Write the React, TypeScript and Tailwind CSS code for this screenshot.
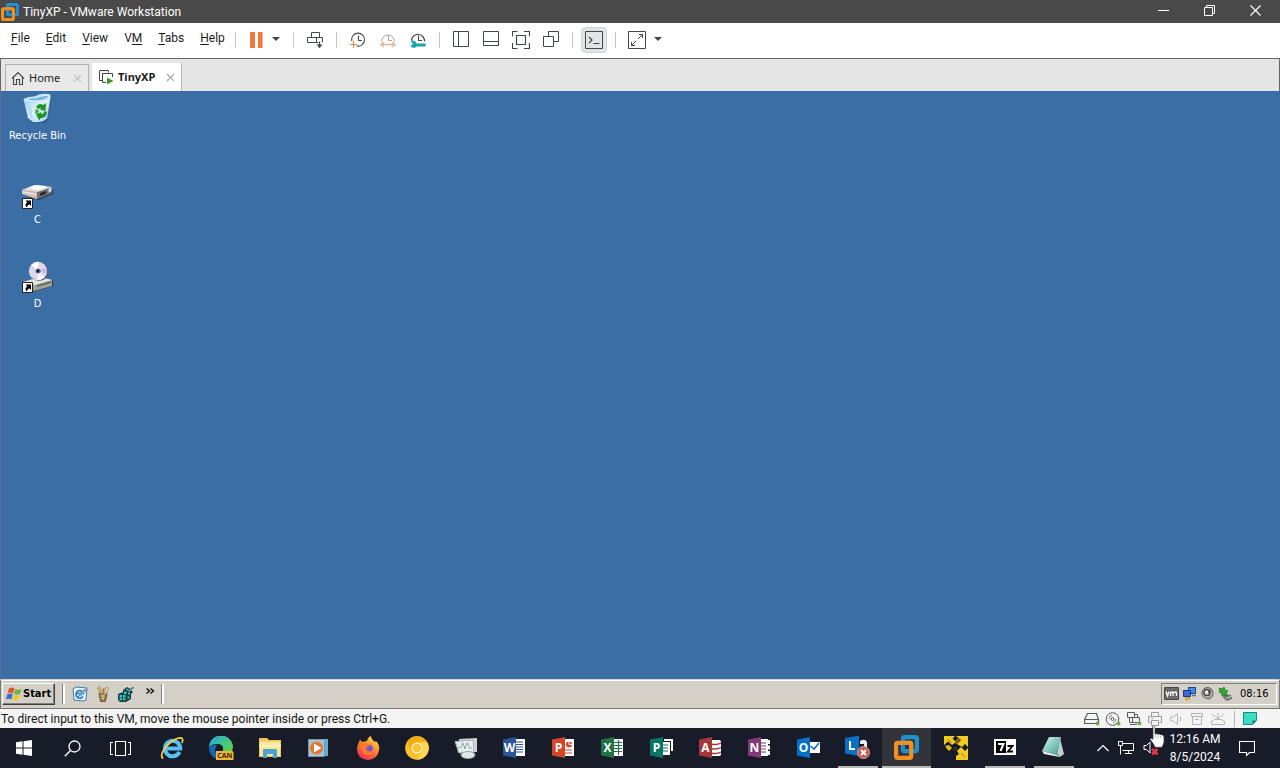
import type { ReactNode } from 'react';

const uiFont = "font-['Noto_Sans','Open_Sans',sans-serif]";
const menuFont = "font-['Roboto','Noto_Sans',sans-serif]";
const xpFont = "font-['DejaVu_Sans_Condensed','DejaVu_Sans',sans-serif]";

function Svg({ w = 20, h = w, children }: { w?: number; h?: number; children: ReactNode }) {
  return (
    <svg width={w} height={h} viewBox={`0 0 ${w} ${h}`} fill="none" aria-hidden="true" className="block shrink-0">
      {children}
    </svg>
  );
}

/* ---------- shared drawings ---------- */

function VmwareLogo({ size }: { size: number }) {
  return (
    <svg width={size} height={size} viewBox="0 0 24 24" fill="none" aria-hidden="true" className="block shrink-0">
      <rect x="8.500" y="2" width="13.500" height="13.500" rx="1.500" stroke="#1d91d0" strokeWidth="4" />
      <rect x="2" y="7.500" width="14.500" height="14.500" rx="1.500" stroke="#f09022" strokeWidth="4" />
      <path d="M8.500 9.500V14q0 1.500 1.500 1.500h4.500" stroke="#1d91d0" strokeWidth="3" />
      <path d="M8.500 7.500H15q1.500 0 1.500 1.500v4" stroke="#f09022" strokeWidth="4" />
    </svg>
  );
}

function Caret() {
  return (
    <Svg w={9} h={5}>
      <path d="M0 0h8L4 4z" fill="#454545" />
    </Svg>
  );
}

/* ---------- title bar ---------- */

function TitleBar() {
  const btn = 'flex h-[23px] w-[46px] items-center justify-center pb-0.5';
  return (
    <header className="flex h-[23px] shrink-0 items-center bg-[#494949] pr-0.5 text-white">
      <div className="pl-px">
        <VmwareLogo size={18} />
      </div>
      <h1 className={`flex-1 pl-1 text-[12px] leading-4 ${menuFont}`}>TinyXP - VMware Workstation</h1>
      <button aria-label="Minimize" className={btn}>
        <Svg w={11}>
          <path d="M0 5.500h11" stroke="#fff" />
        </Svg>
      </button>
      <button aria-label="Restore" className={btn}>
        <Svg w={11}>
          <path d="M.5 2.500h8v8h-8zM2.500 2.500v-2h8v8h-2" stroke="#fff" />
        </Svg>
      </button>
      <button aria-label="Close" className={btn}>
        <Svg w={11}>
          <path d="M.5.5l10 10M10.500.5l-10 10" stroke="#fff" strokeWidth="1.200" />
        </Svg>
      </button>
    </header>
  );
}

/* ---------- menu and toolbar ---------- */

const menus: [string, string, string][] = [
  ['', 'F', 'ile'],
  ['', 'E', 'dit'],
  ['', 'V', 'iew'],
  ['V', 'M', ''],
  ['', 'T', 'abs'],
  ['', 'H', 'elp'],
];

function Tool({ label, active, children }: { label: string; active?: boolean; children: ReactNode }) {
  return (
    <button aria-label={label} className="flex h-[30px] w-[30px] items-center justify-center">
      <span
        className={
          active
            ? 'flex h-[26px] w-[26px] items-center justify-center rounded-sm border border-[#d2d5d6] bg-[#e2e5e6]'
            : 'flex items-center justify-center'
        }
      >
        {children}
      </span>
    </button>
  );
}

function Sep() {
  return <span className="mx-1.5 h-4 w-px bg-[#c4c4c4]" />;
}

function MenuBar() {
  const ink = '#42474b';
  return (
    <div className="flex h-[35px] shrink-0 items-center bg-white pb-0.5">
      <nav className={`flex w-[229px] shrink-0 gap-4 pb-1 pl-[11px] text-[12px] leading-4 text-[#1c1c1c] ${menuFont}`}>
        {menus.map(([a, k, b]) => (
          <button key={k} className="whitespace-nowrap">
            {a}
            <span className="underline underline-offset-2">{k}</span>
            {b}
          </button>
        ))}
      </nav>
      <div className="flex items-center">
        <Sep />
        <Tool label="Suspend">
          <Svg w={14} h={16}>
            <path d="M0 0h5v16H0zM8 0h4.500v16H8z" fill="#f0783a" />
          </Svg>
        </Tool>
        <button aria-label="Power options" className="flex h-[30px] w-[15px] items-center">
          <Caret />
        </button>
        <Sep />
        <Tool label="Send Ctrl+Alt+Del">
          <Svg>
            <path d="M6.500 7.500v-5h8v5M2.500 7.500h15v5M2.500 7.500v5h9v-5M13 12.500h-2" stroke={ink} />
            <path d="M14.500 11.500v6" stroke={ink} strokeWidth="1.400" />
            <path d="M11.500 14.500h6L14.500 18z" fill={ink} />
          </Svg>
        </Tool>
        <Sep />
        <Tool label="Take snapshot">
          <Svg>
            <path d="M3.700 11a6.500 6.500 0 1 1 5 5" stroke={ink} strokeWidth="1.100" />
            <path d="M10.500 5.500v5H14" stroke={ink} strokeWidth="1.100" />
            <path d="M5.500 11v7M2 14.500h7" stroke="#d08b50" strokeWidth="1.200" />
          </Svg>
        </Tool>
        <Tool label="Revert snapshot">
          <Svg>
            <path d="M3.500 11.500a6.500 6.500 0 1 1 13 0" stroke="#a9a4a0" />
            <path d="M10.500 5.500v5H14" stroke="#a9a4a0" />
            <path d="M3 14.500h14M6 12l-3 2.500L6 17M14 12l3 2.500-3 2.500" stroke="#dfb89a" strokeWidth="1.400" />
          </Svg>
        </Tool>
        <Tool label="Manage snapshots">
          <Svg>
            <path d="M3.500 10.500a6.500 6.500 0 1 1 13 1" stroke={ink} strokeWidth="1.200" />
            <path d="M10.500 5.500v5H14" stroke={ink} strokeWidth="1.100" />
            <path
              d="M2.500 11.500l2.500 2-2.500 2.500a3.600 3.600 0 0 0 6 .5h8q1.500 0 1.500-1.500t-1.500-1.500h-8a3.600 3.600 0 0 0-6-2z"
              fill="#18a3ad"
            />
          </Svg>
        </Tool>
        <Sep />
        <Tool label="Show library">
          <Svg w={17}>
            <path d="M.5.5h15v15H.5zM5.500.5v15" stroke={ink} />
          </Svg>
        </Tool>
        <Tool label="Show thumbnail bar">
          <Svg w={17}>
            <path d="M.5.5h15v14H.5zM.5 10.500h15" stroke={ink} />
          </Svg>
        </Tool>
        <Tool label="Full screen">
          <Svg w={18}>
            <path
              d="M5.500.5h-5v5M.5 12v5.500h5M12 .5h5.500v5M17.500 12v5.500H12M4.500 4.500h9v9h-9z"
              stroke={ink}
              strokeWidth="1.200"
            />
          </Svg>
        </Tool>
        <Tool label="Unity mode">
          <Svg w={17}>
            <path d="M.5 5.500h10v10H.5zM5.500 5.500v-5h10v10h-5" stroke={ink} />
          </Svg>
        </Tool>
        <Sep />
        <Tool label="Console view" active>
          <Svg w={18}>
            <path d="M.5.5h17v17H.5z" stroke={ink} />
            <path d="M4 6l3 3-3 3M8.500 12.500h6" stroke={ink} strokeWidth="1.200" />
          </Svg>
        </Tool>
        <Sep />
        <Tool label="Stretch guest">
          <Svg w={18}>
            <path d="M.5.5h17v17H.5z" stroke={ink} />
            <path d="M11 3.500h3.500V7M3.500 11v3.500H7M14.500 3.500l-4.500 4.500M8 10l-4.500 4.500" stroke={ink} />
          </Svg>
        </Tool>
        <button aria-label="Stretch options" className="flex h-[30px] w-[15px] items-center pl-0.5">
          <Caret />
        </button>
      </div>
    </div>
  );
}

/* ---------- tabs ---------- */

function CloseX({ color }: { color: string }) {
  return (
    <Svg w={9}>
      <path d="M1 1l7 7M8 1L1 8" stroke={color} strokeWidth="1.300" />
    </Svg>
  );
}

function TabStrip() {
  return (
    <div className="flex h-[33px] shrink-0 items-end border-x border-t border-[#686868] bg-[#e5e5e5] pl-1 text-[11px] text-[#1b1b1b]">
      <div className="flex h-[27px] w-[84px] items-center border border-b-0 border-[#b2b2b2] bg-[#e9e9e9] pl-[5px]">
        <Svg w={14}>
          <path d="M1 7.500l6-6 6 6M2.500 6.500v7h3v-5h3v5h3v-7" stroke="#42474b" strokeWidth="1.100" />
        </Svg>
        <button className="flex-1 pl-1 text-left leading-4">Home</button>
        <button aria-label="Close Home" className="pr-1.5">
          <CloseX color="#c4c4c4" />
        </button>
      </div>
      <div className="ml-[3px] flex h-7 w-[90px] items-center border-r border-[#b2b2b2] bg-white pl-[7px]">
        <Svg w={15}>
          <path d="M3.500 10.500h-3v-10h9v2M7 12.500H3.500v-9h10V7" stroke="#42474b" />
          <path d="M8 7.500l6.500 3.500L8 14.500z" fill="#3f9a22" />
        </Svg>
        <button className="flex-1 pl-1 text-left font-bold leading-4">TinyXP</button>
        <button aria-label="Close TinyXP" className="pr-1.5">
          <CloseX color="#adadad" />
        </button>
      </div>
    </div>
  );
}

/* ---------- guest desktop ---------- */

function ShortcutArrow() {
  return (
    <>
      <path d="M.5 21.500h10V31.500H.5z" fill="#fff" stroke="#222" />
      <path d="M3.500 23.500H9V29l-1.800-1.700Q5 28.500 4.800 30.500 2 27.500 5.200 25.200z" fill="#000" />
    </>
  );
}

function BinIcon() {
  return (
    <svg width="32" height="32" viewBox="0 0 32 32" aria-hidden="true">
      <defs>
        <linearGradient id="bin" x1="0" y1="0" x2="1" y2="1">
          <stop offset="0" stopColor="#8fc6f0" />
          <stop offset=".5" stopColor="#dff2fd" />
          <stop offset="1" stopColor="#9fcdec" />
        </linearGradient>
      </defs>
      <path d="M8 28l4 2.500 11-1 4-4 2.500-21-3 21z" fill="#2c5482" />
      <path d="M1.500 6L27 1.500 28.500 4 25 25.500q-6 5-14 3.500L6 25z" fill="url(#bin)" />
      <path d="M1.500 6q5-3 11-2.500Q19-.5 28.500 1.500L28 6q-11 4-25 2.500z" fill="#c9e8fa" />
      <path d="M5 6q5-1 9-.5 6-3 12-2.500-1 3-8 4-7 1-13-1z" fill="#77b2de" />
      <path d="M4 10q3 2 5 2l2 15-3-2z" fill="#b9dcf5" />
      <path d="M14 14q3-5 7-2l3-1.800L23.500 18l-6-1.500 2-1.500q-2-.5-3 1.300z" fill="#1f9624" />
      <path d="M25 18.500q0 7-6.500 6.500l-1 2.500L14 21.500l5.500-2.500-.5 2q3 .5 3-2.500z" fill="#1f9624" />
      <path d="M13.500 16l3.500 1-1 4-3-.5z" fill="#42b33c" />
    </svg>
  );
}

function DriveIcon() {
  return (
    <svg width="32" height="32" viewBox="0 0 32 32" aria-hidden="true">
      <path d="M4 19l12 4 15-6v-5L18 21z" fill="#1f3148" />
      <path d="M0 13l12-5 18 2v6L15 22 0 17z" fill="#a49b97" />
      <path d="M0 13l12-5 18 2-15 5z" fill="#dedde2" />
      <path d="M8 10.500L14 8l10 1-2 3-9 1.500z" fill="#fff" />
      <path d="M0 13l15 2.500V22L0 17z" fill="#d1c0ba" />
      <path d="M15 15.500L30 10v6l-15 6z" fill="#756d70" />
      <path d="M18 16l6-2v3l-6 2z" fill="#292a32" />
      <path d="M26.500 11.500l3-1v4l-3 1z" fill="#c5d8ef" />
      <path d="M1 15l13 2.500" stroke="#fff" strokeWidth=".8" />
      <ShortcutArrow />
    </svg>
  );
}

function DiscIcon() {
  return (
    <svg width="32" height="32" viewBox="0 0 32 32" aria-hidden="true">
      <path d="M2 25l9 6 20-6v-6z" fill="#333b3b" />
      <path d="M1 21l17-5 12 3v6l-18 5-11-4z" fill="#9fa397" />
      <path d="M1 21l17-5 12 3-17 5z" fill="#e4e5de" />
      <path d="M15 25l14-4" stroke="#5d6259" strokeWidth="1.500" />
      <circle cx="17" cy="10.500" r="9.500" fill="#4e5c80" />
      <circle cx="16" cy="10" r="9.200" fill="#dad9e9" />
      <path d="M16 10L9.500 3.700a9 9 0 0 1 7-3z" fill="#fff" />
      <path d="M16 10l7 6a9 9 0 0 1-8 3z" fill="#f8f7ff" />
      <path d="M16 10l8.500-3.500a9 9 0 0 1 .3 6z" fill="#c4bddb" />
      <circle cx="16" cy="10" r="2.500" fill="#71738c" />
      <circle cx="16" cy="10" r="1.400" fill="#17171d" />
      <ShortcutArrow />
    </svg>
  );
}

function Desktop() {
  const items: [string, ReactNode][] = [
    ['Recycle Bin', <BinIcon />],
    ['C', <DriveIcon />],
    ['D', <DiscIcon />],
  ];
  return (
    <main className={`flex flex-1 flex-col border-l border-[#5d6f8c] bg-[#3b6ea5] ${xpFont}`}>
      <ul className="flex w-[73px] flex-col gap-[30px] pt-0.5 text-[11px] leading-4 text-white">
        {items.map(([name, icon]) => (
          <li key={name} className="flex h-[54px] flex-col items-center gap-[3px]">
            {icon}
            <span className="whitespace-nowrap">{name}</span>
          </li>
        ))}
      </ul>
    </main>
  );
}

/* ---------- guest taskbar ---------- */

function XpFlag() {
  return (
    <Svg w={16}>
      <path d="M3 2.500q3-2 5.500 0l-1.500 5q-2.500-2-5.500 0z" fill="#e05130" />
      <path d="M9.500 3q2.500 1.500 6 0L14 8q-3 1.500-6 0z" fill="#6cb83c" />
      <path d="M1.200 8.500q3-2 5.500 0L5.200 13.500q-2.500-1.500-5.200 0z" fill="#3f68d2" />
      <path d="M7.700 9q2.500 1.500 6 0l-1.500 5q-3 1.500-6 0z" fill="#f2c72e" />
    </Svg>
  );
}

function XpTaskbar() {
  const grip = 'h-5 w-[3px] border-l border-[#808080] bg-white';
  return (
    <footer
      className={`flex h-[30px] shrink-0 items-center border border-[#777] border-t-[#d4d0c8] bg-[#d4d0c8] shadow-[inset_0_1px_0_#fff] ${xpFont}`}
    >
      <button className="ml-px flex h-[22px] w-[53px] items-center gap-px border border-b-[#404040] border-l-white border-r-[#404040] border-t-white pl-[3px] text-[11px] font-bold shadow-[inset_-1px_-1px_0_#808080]">
        <XpFlag />
        Start
      </button>
      <span className={`ml-[7px] ${grip}`} />
      <div className="flex items-center gap-[7px] pl-[7px]">
        <button aria-label="Internet Explorer">
          <Svg w={16}>
            <path d="M1 3l3-2 11 1-1 12-3 1-9-1z" fill="#e3f3fc" stroke="#487ba3" />
            <path d="M11 10.500a3.800 3.800 0 1 1 .5-3H5" stroke="#2c7cc1" strokeWidth="1.700" />
            <path d="M6 11l6-7 1.500-.5-.5 2-5 5" stroke="#2667a3" fill="#fff" />
          </Svg>
        </button>
        <button aria-label="Paint tools">
          <Svg w={16}>
            <path d="M4 7h8l-1.500 8.500h-5z" fill="#9b8150" stroke="#6a5735" />
            <path d="M6 8L2.500 2l2-1.500L8 7" fill="#d6b56a" stroke="#8e7547" strokeWidth=".6" />
            <path d="M9 8l2-7 2.500 1L11 8" fill="#e6d9a6" stroke="#8e7547" strokeWidth=".6" />
            <path d="M6.500 10h3M7 12.500h2" stroke="#e2cf9c" strokeWidth="1.300" />
            <path d="M8 6l1-4" stroke="#b63e2f" />
          </Svg>
        </button>
        <button aria-label="Registry editor">
          <Svg w={16}>
            <path d="M0 8l5-2V4l4-3 3 2 3-2 1 1-3 2 2 2-2 2v5l-5 3H2l-2-2z" fill="#113f42" />
            <path
              d="M1.500 9H4v2.500H1.500zM5 9h2.500v2.500H5zM1.500 12.200H4v2H1.500zM5 12.200h2.500v2H5zM6 5.500h2.500V8H6zM10 6.500h2v2h-2zM9.500 10.500h2v2h-2z"
              fill="#40c7c8"
            />
            <path d="M8 3l3 1.500M11 5.500l3.500-3" stroke="#8fe6e4" />
          </Svg>
        </button>
      </div>
      <button aria-label="More quick launch items" className="pb-1.5 pl-3">
        <Svg w={9} h={7}>
          <path d="M.5.5l3 2.500-3 2.500M4.500.5l3 2.500-3 2.500" stroke="#111" strokeWidth="1.400" />
        </Svg>
      </button>
      <span className={`ml-1.5 ${grip}`} />
      <div className="ml-auto mr-0.5 flex h-[22px] w-[116px] items-center gap-0.5 border border-b-white border-l-[#808080] border-r-white border-t-[#808080] pl-0.5 text-[11px] leading-4">
        <Svg w={16}>
          <path d="M.5 1.500h14v12H.5z" fill="#6a6a6a" stroke="#484848" />
          <path
            d="M2 5.500L3.500 10 5 5.500M6.500 10V6M6.500 7q2-2 2.500 0v3M9.500 7q2.500-2 3 0v3"
            stroke="#fff"
            strokeWidth="1.300"
          />
        </Svg>
        <Svg w={16}>
          <path d="M6.500 1.500h7v6h-7z" fill="#3a8ee5" stroke="#233f88" />
          <path d="M1.500 4.500h7v6h-7z" fill="#2f6fd6" stroke="#1c3477" />
          <path d="M3 12.500h5M10 9.500h4" stroke="#5d6c8b" strokeWidth="1.500" />
          <circle cx="5.500" cy="13" r="2" fill="#e6b32e" />
        </Svg>
        <Svg w={16}>
          <circle cx="7.500" cy="7" r="5.500" fill="#b9b9b9" stroke="#555" />
          <circle cx="7" cy="6.500" r="3" fill="#e8e8e8" stroke="#444" strokeWidth="1.400" />
          <path d="M8 5l3-1.500L9 9z" fill="#444" />
          <path d="M9 13.500l4-5" stroke="#888" strokeWidth="2" />
        </Svg>
        <Svg w={16}>
          <path d="M6 8l7 1 1.500 4-6 2-4-4z" fill="#777b75" />
          <path d="M8.500 12l5-1.500" stroke="#d8d8d8" />
          <path d="M1 2l3 1 2-2 1 3 3 1-2 2 2 3-4-1-2 1-.5-3L1 6l1-2z" fill="#31a83a" stroke="#147a20" strokeWidth=".7" />
        </Svg>
        <time className="pl-1">08:16</time>
      </div>
    </footer>
  );
}

/* ---------- VMware status bar ---------- */

function StatusBar() {
  const on = '#565b5e';
  const off = '#b3b6b8';
  const dot = <circle cx="13.500" cy="12.500" r="2" fill="#76ac37" />;
  return (
    <div className="flex h-[19px] shrink-0 items-center bg-[#f4f4f4] text-[#151515]">
      <p className={`flex-1 whitespace-nowrap pl-px text-[12px] leading-4 ${menuFont}`}>
        To direct input to this VM, move the mouse pointer inside or press Ctrl+G.
      </p>
      <div className="flex items-center gap-[5px]">
        <Svg w={16}>
          <path d="M3.500 2.500h9l2 6v4H.5v-4zM.5 8.500h14" stroke={on} strokeWidth="1.200" />
          {dot}
        </Svg>
        <Svg w={16}>
          <circle cx="7.500" cy="8" r="6.300" stroke={on} />
          <circle cx="7.500" cy="8" r="1.500" stroke={on} />
          <path d="M4 8q0-3 3-4M11 8q0 3-3 4" stroke={on} strokeWidth=".7" />
          {dot}
        </Svg>
        <Svg w={16}>
          <path d="M1.500 1.500h7v5h-7zM6.500 6.500h7v5h-7zM3.500 6.500v5h3M8.500 3.500h3v3M4 13.500h7" stroke={on} />
          {dot}
        </Svg>
        <Svg w={16}>
          <path d="M4.500 5.500v-4h7v4M3.500 11.500h-2v-6h13v6h-2M4.500 9.500h7v5h-7zM4 7.500h2" stroke="#989c9f" />
        </Svg>
        <Svg w={16}>
          <path d="M2.500 6h3l4-3.500v11L5.500 10h-3zM12 5.500q2 2.500 0 5" stroke={off} />
        </Svg>
        <Svg w={16}>
          <path d="M2.500 2.500h11v3h-11zM3.500 5.500v8h9v-8M6 8.500h4" stroke={off} />
        </Svg>
        <Svg w={16}>
          <path d="M1.500 13.500v-3l3-2h7l3 2v3zM8 2v6M5.500 5.500L8 8l2.500-2.500M2 3l3 3M14 3l-3 3" stroke={off} />
        </Svg>
      </div>
      <span className="ml-2 mr-2 h-4 w-px bg-[#b5b5b5]" />
      <div className="mr-[22px]">
        <Svg w={15}>
          <path d="M.5 1.500h13v8l-4 4h-9z" fill="#36dfc2" stroke="#168b80" />
          <path d="M9.500 13.500v-4h4z" fill="#138070" />
        </Svg>
      </div>
    </div>
  );
}

/* ---------- host taskbar ---------- */

type OfficeKind = 'lines' | 'grid' | 'chart' | 'mail' | 'tabs' | 'brochure' | 'stack';

function Office({ letter, color, kind }: { letter: string; color: string; kind: OfficeKind }) {
  return (
    <svg width="23" height="24" viewBox="0 0 23 24" aria-hidden="true">
      {kind === 'mail' && (
        <>
          <path d="M11 6h12v11H11z" fill="#fff" />
          <path d="M13.500 10l3.500 3 5-6" stroke={color} strokeWidth="1.600" fill="none" />
        </>
      )}
      {kind === 'lines' && (
        <>
          <path d="M12 3h10v17H12z" fill="#fff" />
          <path d="M13 6h7M13 8.500h7M13 11h7M13 13.500h7M13 16h7" stroke={color} strokeWidth="1.100" />
        </>
      )}
      {kind === 'grid' && (
        <>
          <path d="M12 3h10v17H12z" fill="#fff" />
          <path d="M13 6.500h8M13 9.500h8M13 12.500h8M13 15.500h8M17.500 4v15" stroke={color} strokeWidth="1.200" />
        </>
      )}
      {kind === 'chart' && (
        <>
          <path d="M12 3h10v17H12z" fill="#fff" />
          <circle cx="17" cy="8.500" r="3" fill={color} />
          <path d="M17 8.500V4M17 8.500h5" stroke="#fff" />
          <path d="M13 14h7M13 17h7" stroke={color} strokeWidth="1.200" />
        </>
      )}
      {kind === 'brochure' && (
        <>
          <path d="M14 3h9v12h-2V5h-7z" fill="#fff" />
          <path d="M12 6h8v13h-8z" fill="#fff" />
          <path d="M13 9h5M13 12h5M13 15h5" stroke={color} strokeWidth="1.200" />
        </>
      )}
      {kind === 'tabs' && (
        <>
          <path d="M12 3h8v17h-8z" fill="#fff" />
          <path d="M20 4h2v4h-2zM20 9.500h2v4h-2zM20 15h2v4h-2z" fill="#fff" />
          <path d="M13 7h5M13 10h5M13 13h5M13 16h5" stroke={color} strokeWidth="1.100" />
        </>
      )}
      {kind === 'stack' && (
        <>
          <path d="M12 4h8q2 0 2 2v12q0 2-2 2h-8z" fill="#fff" />
          <path
            d="M12 8q6 1.500 10-1M12 12.500q6 1.500 10-1M12 17q6 1.500 10-1"
            stroke={color}
            strokeWidth="1.400"
            fill="none"
          />
        </>
      )}
      <path d="M0 3.500L13 1v21L0 19.500z" fill={color} />
      <text x="6.500" y="16" textAnchor="middle" fontSize="12" fontWeight="700" fill="#fff" fontFamily="Open Sans, sans-serif">
        {letter}
      </text>
    </svg>
  );
}

const hostApps: { name: string; icon: ReactNode; state?: 'open' | 'active' }[] = [
  {
    name: 'Internet Explorer',
    icon: (
      <Svg w={24}>
        <path d="M19.500 16a7.700 7.700 0 1 1 .8-3.500H7" stroke="#56c1f2" strokeWidth="4" />
        <path d="M3 22.500Q-1 19 7 9.500 16 1 21.500 2q2 1 .5 5" stroke="#f5cf43" strokeWidth="1.800" />
      </Svg>
    ),
  },
  {
    name: 'Edge Canary',
    icon: (
      <Svg w={26} h={24}>
        <defs>
          <linearGradient id="edge" x1="0" y1="0" x2="1" y2=".6">
            <stop offset="0" stopColor="#20a9df" />
            <stop offset="1" stopColor="#57d35a" />
          </linearGradient>
        </defs>
        <path d="M1 12A12 12 0 0 1 25 11q0 6-7 6-4 0-3-3 1-6-6-6Q2 8 1 12z" fill="url(#edge)" />
        <path d="M1 12q3-4 8-3-4 5 0 9 3 4 10 3-4 3-9 2Q1 21 1 12z" fill="#1467b4" />
        <path d="M8 15h16q1.500 0 1.500 1.500V24H8z" fill="#f5b62d" />
        <text x="16.800" y="22.300" textAnchor="middle" fontSize="7" fontWeight="700" fill="#2c240e" fontFamily="Open Sans, sans-serif">
          CAN
        </text>
      </Svg>
    ),
  },
  {
    name: 'File Explorer',
    icon: (
      <Svg w={22} h={20}>
        <path d="M0 0h8l2 2h12v17H0z" fill="#efc65a" />
        <path d="M1 3.500h20V18H1z" fill="#fae59a" />
        <path d="M0 7l22-1v3H0z" fill="#fff0ad" />
        <path d="M4 20v-8q0-1 1-1h12q1 0 1 1v8h-4v-4H8v4z" fill="#4ba3cf" />
      </Svg>
    ),
  },
  {
    name: 'Media Player',
    icon: (
      <Svg w={21} h={20}>
        <path d="M5 1h15v17H5z" fill="#5fb1dd" />
        <path d="M.5 1.500h16v17H.5z" fill="#a9c3d4" stroke="#7896ab" />
        <circle cx="8.500" cy="10" r="6.500" fill="#e77434" />
        <path d="M6 5.500l7.500 4.500L6 14.500z" fill="#fff" />
      </Svg>
    ),
  },
  {
    name: 'Firefox',
    icon: (
      <Svg w={24}>
        <defs>
          <linearGradient id="ff" x1=".8" y1="0" x2=".2" y2="1">
            <stop offset="0" stopColor="#ffe34b" />
            <stop offset=".45" stopColor="#ff8726" />
            <stop offset="1" stopColor="#ef245c" />
          </linearGradient>
        </defs>
        <path d="M3 6l1-2.500L6 6l5-1q1-4 4-5 0 3 4 6l1-1q4 4 3 9-1 9-11 10Q1 23 1 13 1 9 3 6z" fill="url(#ff)" />
        <circle cx="12" cy="13" r="5" fill="#7751d7" />
        <path d="M5 8q4-2 7 0l3 1-4 2q-2 2 1 4 3 1 5-1-1 6-7 5-5-2-5-11z" fill="#ff7a2c" />
      </Svg>
    ),
  },
  {
    name: 'Chrome Canary',
    icon: (
      <Svg w={24}>
        <circle cx="12" cy="12" r="11.800" fill="#fbc02d" />
        <path d="M2 6a11.500 11.500 0 0 1 20 0H12a6 6 0 0 0-5 9z" fill="#f3ad17" />
        <path d="M22 6a11.500 11.500 0 0 1-10 17.500L17 15q2-4-2-8z" fill="#ffd550" />
        <circle cx="12" cy="12" r="5.500" fill="#fff0b0" />
        <circle cx="12" cy="12" r="4.300" fill="#f7c43c" />
      </Svg>
    ),
  },
  {
    name: 'System Monitor',
    icon: (
      <Svg w={24} h={22}>
        <path d="M5 2l18-1v14l-15 1z" fill="#cfd5d7" />
        <path d="M1 4.500L19 3l1 12-15 1z" fill="#edf0f0" stroke="#a9b1b4" />
        <path d="M4 11l3-1 2-4 2 6 2-6 3 5h2" stroke="#6faab2" />
        <path d="M4 4.500v11M8 4v11M15 3.500V15" stroke="#c2cacc" strokeWidth=".7" />
        <ellipse cx="14" cy="18" rx="7" ry="3.500" fill="#e3e6e7" stroke="#9ca3a7" />
      </Svg>
    ),
  },
  { name: 'Word', icon: <Office letter="W" color="#2b569a" kind="lines" /> },
  { name: 'PowerPoint', icon: <Office letter="P" color="#d24726" kind="chart" /> },
  { name: 'Excel', icon: <Office letter="X" color="#217346" kind="grid" /> },
  { name: 'Publisher', icon: <Office letter="P" color="#087568" kind="brochure" /> },
  { name: 'Access', icon: <Office letter="A" color="#a4373a" kind="stack" /> },
  { name: 'OneNote', icon: <Office letter="N" color="#80397b" kind="tabs" /> },
  { name: 'Outlook', icon: <Office letter="O" color="#0072c6" kind="mail" /> },
  {
    name: 'Lync',
    state: 'open',
    icon: (
      <Svg w={26} h={24}>
        <path d="M15 6q5-3 7 1v6h-3V9h-4z" fill="#e4eefa" />
        <path d="M0 3l14-2.500V21L0 18.500z" fill="#0b6fc2" />
        <path d="M5 6v8h5" stroke="#fff" strokeWidth="2" />
        <circle cx="18.500" cy="17.500" r="6" fill="#ca5b54" stroke="#e99c94" />
        <path d="M16 15l5 5M21 15l-5 5" stroke="#fff" strokeWidth="2" />
      </Svg>
    ),
  },
  { name: 'VMware Workstation', state: 'active', icon: <VmwareLogo size={25} /> },
  {
    name: 'Display Switcher',
    icon: (
      <Svg w={24}>
        <path d="M0 0h11L8.500 2.500 12 6 8 9 4 5.500 0 9z" fill="#f2cb22" />
        <path d="M12 0h12v11l-3-3-3 3-5-3 4-4z" fill="#f2cb22" />
        <path d="M24 24H12v-4l3-2-2-3 4-4 4 4 3-3z" fill="#f2cb22" />
        <path d="M1 10l4-1 3 3-3 3-2-2z" fill="#e0b91f" />
        <path d="M13 3h3l-4 5zM17 17l4 4M3.500 3.500l4 3" stroke="#94770f" fill="#6d5a12" />
        <path d="M9 12.500l3-2 2 2.500-2.500 2z" fill="#3a3417" />
      </Svg>
    ),
  },
  {
    name: '7-Zip',
    state: 'open',
    icon: (
      <Svg w={22} h={16}>
        <path d="M0 0h22v16H0z" fill="#fff" />
        <path d="M2 2h10v12H2z" fill="#000" />
        <path d="M4 5h5.500L6.500 12" stroke="#fff" strokeWidth="2" />
        <path d="M13.500 7h5L14 12.500h5" stroke="#000" strokeWidth="1.800" />
      </Svg>
    ),
  },
  {
    name: 'Notebook',
    state: 'open',
    icon: (
      <Svg w={24} h={22}>
        <defs>
          <linearGradient id="note" x1="0" y1="0" x2="1" y2="1">
            <stop offset="0" stopColor="#d5f4ee" />
            <stop offset="1" stopColor="#3c9d94" />
          </linearGradient>
        </defs>
        <path d="M18 2l4 16-4 3-3-3z" fill="#c3cfca" />
        <path d="M7 1h12l-4 18-15-4z" fill="url(#note)" />
        <path d="M0 15l15 4 3 2-16-3z" fill="#edf3ee" />
      </Svg>
    ),
  },
];

function HostTaskbar() {
  const sys = 'flex h-10 w-12 items-center justify-center';
  return (
    <footer className="flex h-10 shrink-0 items-center bg-[#181b28] text-white">
      <button aria-label="Start menu" className={sys}>
        <Svg w={16}>
          <path
            d="M0 2.200L6.500 1.300v6.200H0zM7.500 1.200L16 0v7.500H7.500zM0 8.500h6.500v6.200L0 13.800zM7.500 8.500H16V16l-8.500-1.200z"
            fill="#fff"
          />
        </Svg>
      </button>
      <button aria-label="Search" className={sys}>
        <Svg w={17}>
          <circle cx="10.500" cy="6.500" r="5.500" stroke="#fff" strokeWidth="1.300" />
          <path d="M6.500 10.500L.8 16.200" stroke="#fff" strokeWidth="1.400" />
        </Svg>
      </button>
      <button aria-label="Task view" className={sys}>
        <Svg w={21} h={15}>
          <path d="M5.500.5h10v14h-10zM3 1.500H.5v12H3M18 1.500h2.500v12H18" stroke="#fff" strokeWidth="1.100" />
        </Svg>
      </button>
      <div className="flex flex-1 pl-[3px]">
        {hostApps.map((app) => (
          <button
            key={app.name}
            aria-label={app.name}
            className={
              app.state === 'active'
                ? 'flex h-10 w-[49px] items-center justify-center border-b-2 border-[#b9b9b9] bg-[#33343a]'
                : 'flex h-10 w-[49px] items-center justify-center'
            }
          >
            {app.state === 'open' ? (
              <span className="flex h-10 w-10 items-center justify-center border-b-2 border-[#b9b9b9]">{app.icon}</span>
            ) : (
              app.icon
            )}
          </button>
        ))}
      </div>
      <div className="flex items-center gap-2">
        <button aria-label="Show hidden icons">
          <Svg w={14} h={8}>
            <path d="M1.500 7L7 1.500 12.500 7" stroke="#fff" strokeWidth="1.200" />
          </Svg>
        </button>
        <button aria-label="Network">
          <Svg w={17} h={16}>
            <path d="M4.500 3.500h11v7h-11M.5 1.500h4v4h-4zM2.500 5.500v9M10.500 10.500v3M7 13.500h7" stroke="#fff" />
          </Svg>
        </button>
        <button aria-label="Volume muted">
          <Svg w={16}>
            <path d="M1 5.500h2.500L7 2v11L3.500 9.500H1z" stroke="#fff" />
            <path d="M9 9l5.500 5.500M14.500 9L9 14.500" stroke="#e53847" strokeWidth="2.500" />
          </Svg>
        </button>
      </div>
      <div className={`ml-2.5 w-[52px] text-center text-[12px] leading-[18px] ${menuFont}`}>
        <time className="block whitespace-nowrap">12:16 AM</time>
        <time className="block">8/5/2024</time>
      </div>
      <button aria-label="Notifications" className="ml-[18px] mr-[25px]">
        <Svg w={16} h={17}>
          <path d="M.5 1.500h15v11h-5l-3 3v-3h-7z" stroke="#fff" strokeWidth="1.100" />
        </Svg>
      </button>
    </footer>
  );
}

function Pointer() {
  return (
    <div className="pointer-events-none absolute bottom-5 right-[115px]">
      <Svg w={16} h={22}>
        <path
          d="M3 1q2-1.500 3 .5V8q1-1 2.500.2 1.500-1 2.500.6 1.500-1 2.800.5 1.200.2 1.200 2v5q-1 3-2 5H6q-1-3-5-8 .5-2 3 0V2z"
          fill="#fff"
          stroke="#333"
          strokeWidth=".7"
        />
        <path d="M6.200 8v4M8.900 9v3M11.500 9.500V12" stroke="#999" strokeWidth=".7" />
      </Svg>
    </div>
  );
}

export default function App() {
  return (
    <div className={`relative flex min-h-screen flex-col overflow-hidden bg-white ${uiFont}`}>
      <TitleBar />
      <MenuBar />
      <TabStrip />
      <Desktop />
      <XpTaskbar />
      <StatusBar />
      <HostTaskbar />
      <Pointer />
    </div>
  );
}
